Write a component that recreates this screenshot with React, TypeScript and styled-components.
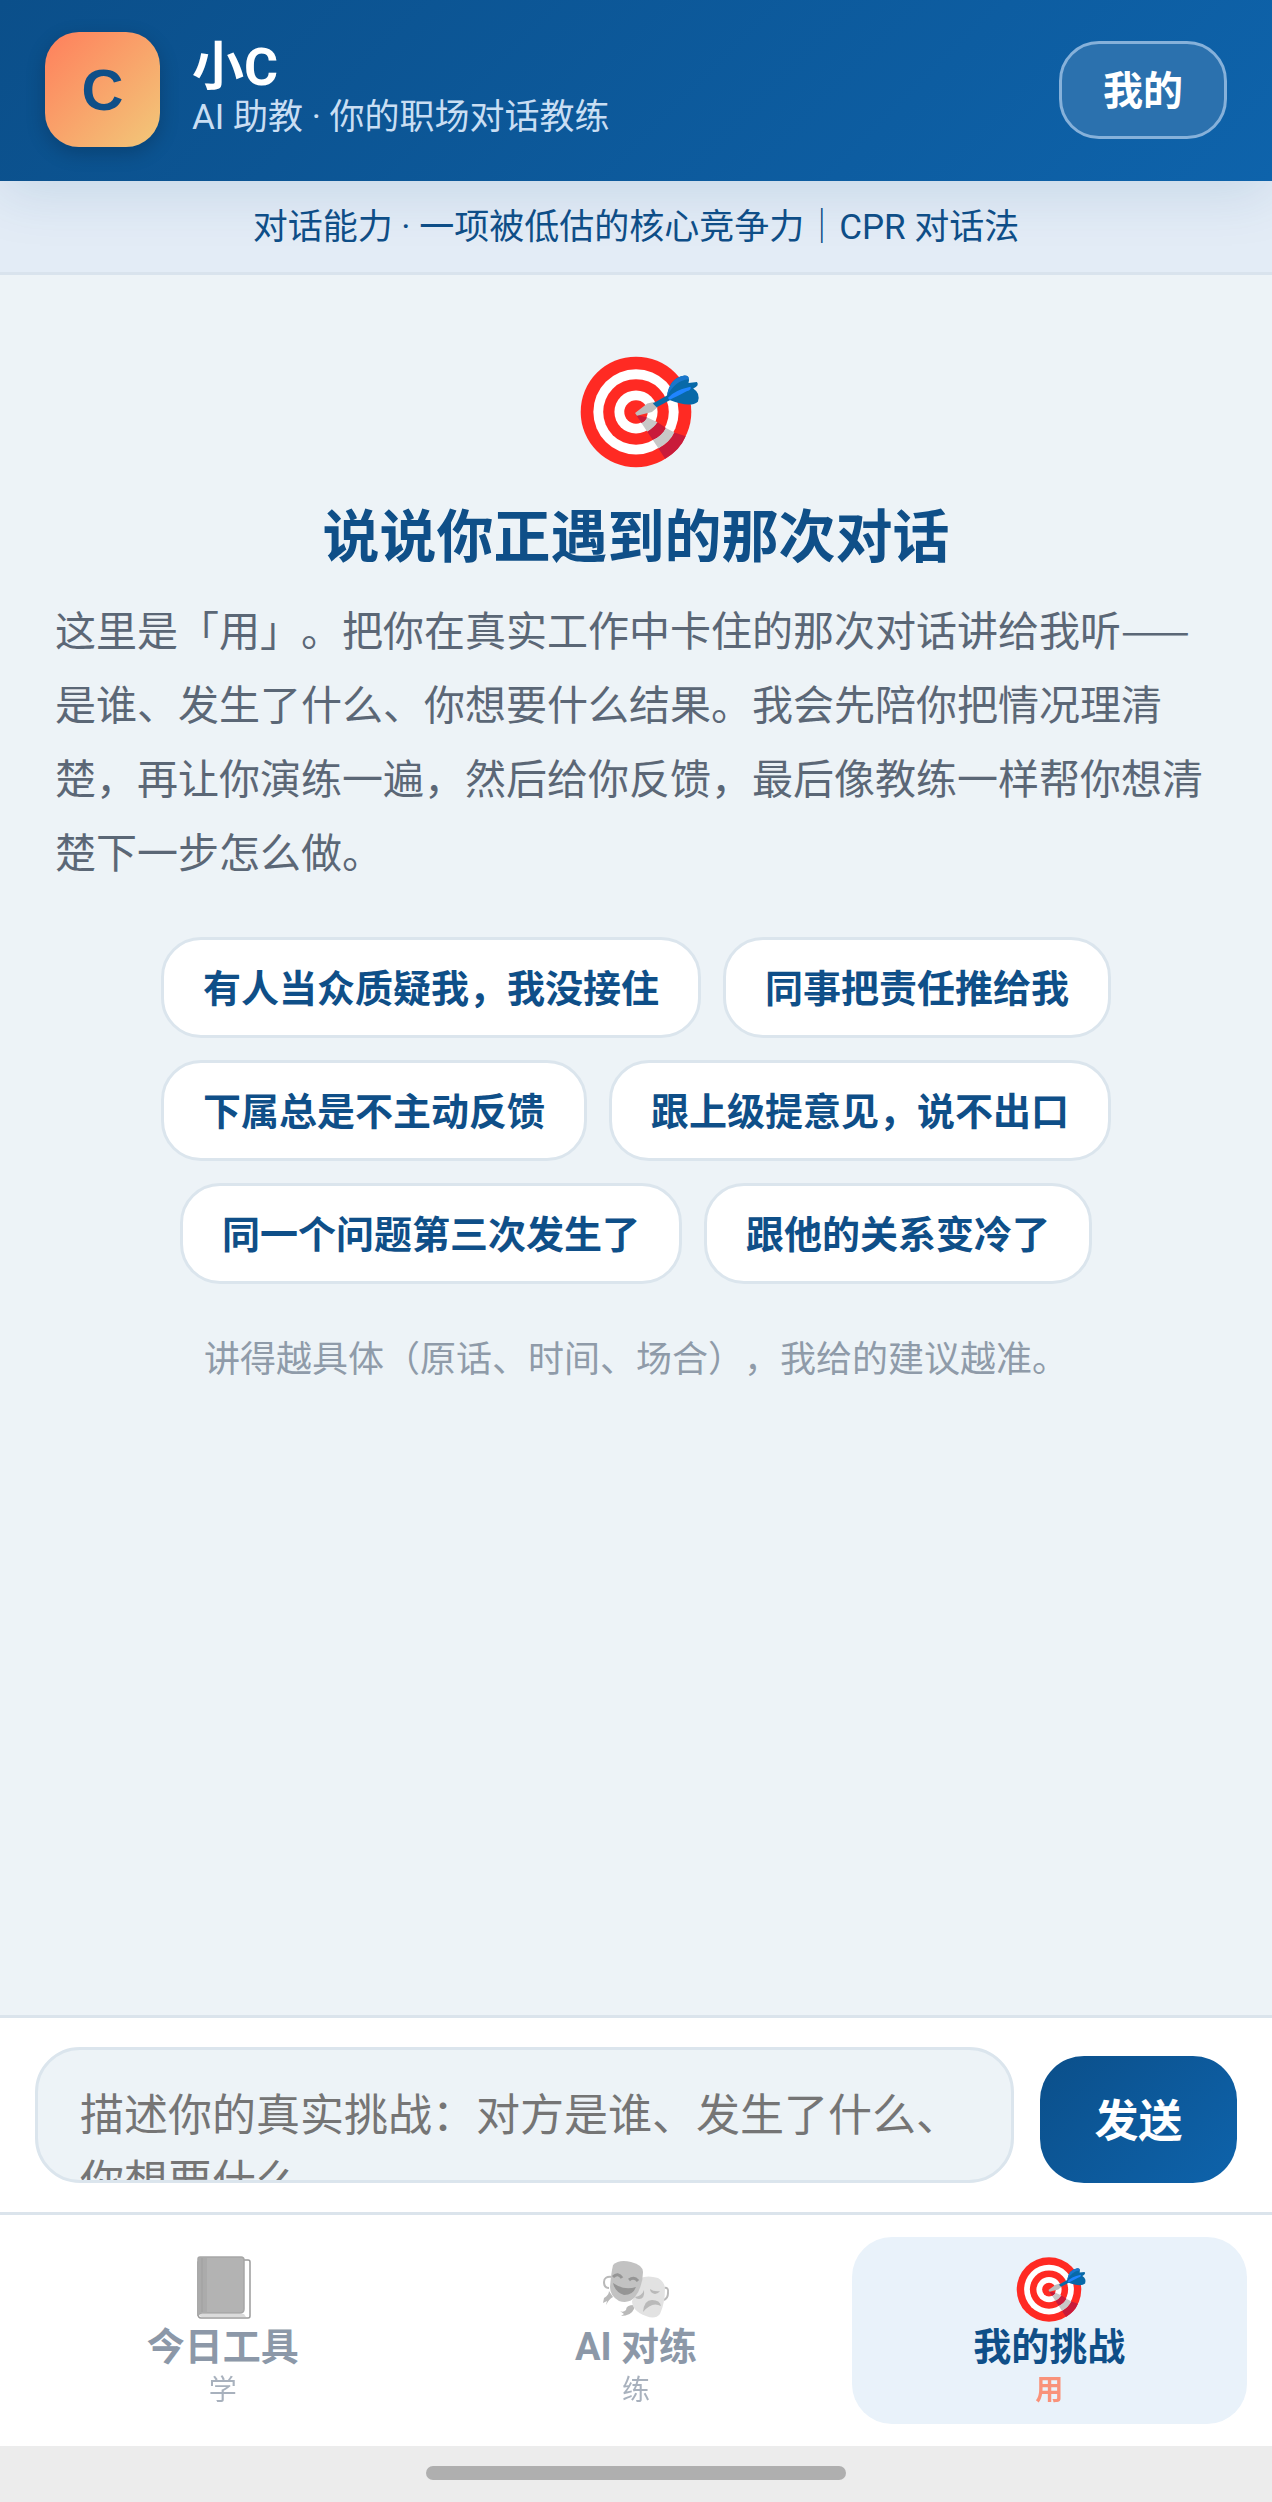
import React, { useState } from 'react';
import styled, { createGlobalStyle, css } from 'styled-components';

const GlobalStyle = createGlobalStyle`
  * {
    box-sizing: border-box;
  }

  body {
    margin: 0;
    background: #edf3f7;
    font-family: 'Noto Sans CJK SC', sans-serif;
    text-spacing-trim: space-all;
  }

  button, textarea {
    font-family: inherit;
    text-spacing-trim: inherit;
    margin: 0;
  }
`;

const Page = styled.div`
  min-height: 100vh;
  display: flex;
  flex-direction: column;
`;

const Header = styled.header`
  position: relative;
  display: flex;
  align-items: center;
  gap: 32px;
  padding: 32px 45px 34px;
  background: linear-gradient(135deg, #0b4f8a, #0e63ab);
  box-shadow: 0 12px 54px rgba(11, 79, 138, 0.13);
`;

const Avatar = styled.div`
  width: 115px;
  height: 115px;
  border-radius: 34px;
  display: flex;
  align-items: center;
  justify-content: center;
  background: linear-gradient(135deg, #ff7f5c, #f2c879);
  color: #0f4f88;
  font: bold 58px/60px 'Liberation Sans', sans-serif;
  box-shadow: 0 6px 20px rgba(0, 0, 0, 0.2);
`;

const Heading = styled.div`
  flex: 1;
  padding-top: 3px;
  font-family: Roboto, 'Noto Sans CJK SC', sans-serif;
`;

const Name = styled.h1`
  margin: 0;
  color: #fff;
  font-size: 52px;
  line-height: 54px;
`;

const Role = styled.p`
  margin: 0;
  color: #c9def3;
  font-size: 35px;
  line-height: 46px;
`;

const MineButton = styled.button`
  height: 98px;
  padding: 0 41px 4px;
  border: 3px solid #86b1da;
  border-radius: 40px;
  background: #2b71ae;
  color: #fff;
  font-size: 40px;
  font-weight: bold;
  cursor: pointer;
`;

const Slogan = styled.div`
  padding: 24px 36px 21px;
  border-bottom: 3px solid #d9e3ed;
  background: #e3ecf6;
  color: #0f4f88;
  font-family: Roboto, 'Noto Sans CJK SC', sans-serif;
  font-size: 35px;
  line-height: 46px;
  text-align: center;
`;

const Main = styled.main`
  flex: 1;
  display: flex;
  flex-direction: column;
  align-items: center;
  padding: 76px 55px 48px;
`;

const Title = styled.h2`
  margin: 19px 0 17px;
  color: #0f4f88;
  font-size: 57px;
  line-height: 84px;
`;

const Intro = styled.p`
  margin: 0;
  width: 100%;
  color: #5b6776;
  font-size: 41px;
  line-height: 74px;
`;

const Chips = styled.div`
  display: flex;
  flex-wrap: wrap;
  justify-content: center;
  gap: 22px;
  max-width: 1020px;
  margin: 50px 0 42px;
`;

const Chip = styled.button`
  height: 101px;
  padding: 0 39px 4px;
  border: 3px solid #dbe5ed;
  border-radius: 40px;
  background: #fff;
  color: #0f4f88;
  font-size: 38px;
  font-weight: bold;
  cursor: pointer;
`;

const Hint = styled.p`
  margin: 0;
  color: #8f9ba9;
  font-size: 36px;
  line-height: 60px;
`;

const Composer = styled.form`
  display: flex;
  align-items: flex-end;
  gap: 26px;
  padding: 29px 35px;
  border-top: 3px solid #dbe4ec;
  background: #fff;
`;

const Input = styled.textarea`
  flex: 1;
  min-width: 0;
  height: 136px;
  padding: 29px 42px 0;
  border: 3px solid #dbe5ed;
  border-radius: 45px;
  background: #edf3f7;
  color: #1f2d3d;
  font-size: 44px;
  line-height: 66px;
  resize: none;
  overflow: hidden;

  &::placeholder {
    color: #757575;
    opacity: 1;
  }
`;

const SendButton = styled.button`
  width: 197px;
  height: 127px;
  padding: 0 0 4px;
  border: 0;
  border-radius: 44px;
  background: linear-gradient(135deg, #0b4f8a, #0e63ab);
  color: #fff;
  font-size: 44px;
  font-weight: bold;
  cursor: pointer;
`;

const Nav = styled.nav`
  display: grid;
  grid-template-columns: repeat(3, 1fr);
  gap: 18px;
  padding: 22px 25px;
  border-top: 3px solid #dbe4ec;
  background: #fff;
`;

const TabLabel = styled.span`
  font-size: 38px;
  font-weight: bold;
  line-height: 46px;
`;

const TabSub = styled.span`
  font-size: 28px;
  line-height: 42px;
  opacity: 0.75;
`;

const Tab = styled.button<{ $active: boolean }>`
  display: flex;
  flex-direction: column;
  align-items: center;
  padding: 17px 0 12px;
  border: 0;
  border-radius: 40px;
  background: transparent;
  color: #8c98a8;
  font-family: Roboto, 'Noto Sans CJK SC', sans-serif;
  cursor: pointer;

  svg {
    filter: grayscale(1);
    opacity: 0.6;
  }

  ${({ $active }) =>
    $active &&
    css`
      background: #e9f2fa;
      color: #0f4f88;

      svg {
        filter: none;
        opacity: 1;
      }

      ${TabSub} {
        color: #ff7350;
        font-weight: bold;
      }
    `}
`;

const HomeBar = styled.div`
  display: flex;
  justify-content: center;
  padding: 20px 0 22px;
  background: #ececec;
`;

const HomeHandle = styled.div`
  width: 33%;
  height: 14px;
  border-radius: 7px;
  background: #afafaf;
`;

const TargetIcon = ({ size }: { size: number }) => (
  <svg width={size} height={size} viewBox="-3 0 128 128" overflow="visible" aria-hidden="true">
    <circle cx="61" cy="65" r="59" fill="#ff2a23" />
    <circle cx="61" cy="65" r="45.5" fill="#fff" />
    <circle cx="61" cy="65" r="35" fill="#ff2a23" />
    <circle cx="61" cy="65" r="23" fill="#fff" />
    <circle cx="61" cy="65" r="12.5" fill="#ff2a23" />
    <path d="M61 68 L67 77 Q72 75 73 71Z" fill="#c91b3a" />
    <path d="M67 77 L73 86 Q81 82 84 76 L73 71 Q71 75 67 77Z" fill="#c8c8c8" />
    <path d="M73 86 L79 95 Q90 90 93 82 L84 76 Q80 82 73 86Z" fill="#c91b3a" />
    <path d="M79 95 L85 104 Q98 97 102 87 L93 82 Q88 91 79 95Z" fill="#c8c8c8" />
    <path d="M85 104 L92 115 Q108 106 114 91 L102 87 Q97 98 85 104Z" fill="#c91b3a" />
    <path d="M60 66 L73 56 L81 54 L84 60 L78 65 L62 69Z" fill="#bdbdbd" />
    <path d="M79 56 L95 47 L98 52 L83 60Z" fill="#0869a8" />
    <path d="M94 48 Q97 28 113 26 Q119 26 117 34 L126 33 Q129 37 122 40 Q130 45 127 54 Q119 61 96 52Z" fill="#0869a8" />
    <path d="M94 48 Q97 28 113 26 Q118 26 117 30 Q103 31 94 48Z" fill="#1a76cc" />
    <path d="M95 50 Q101 42 119 38 Q121 41 115 43 Q104 49 97 52Z" fill="#1f85ff" />
  </svg>
);

const BookIcon = () => (
  <svg width="70" height="70" viewBox="0 0 70 70" aria-hidden="true">
    <path d="M12 6 H60 Q62 6 62 8 V62 Q62 64 60 64 H13 Q10 64 10 60 V8Z" fill="#fff" stroke="#5a5a5a" strokeWidth="1.5" />
    <path d="M12 60 H56 L58 63 H14 Q11 63 12 60Z" fill="#c4c4c4" />
    <path d="M12 3 H53 Q56 3 56 6 V55 Q56 59 52 59 H14 Q11 59 10 62 V5 Q10 3 12 3Z" fill="#828282" stroke="#6c6c6c" strokeWidth="1.5" />
    <path d="M11 4 H19 V59 H14 Q11 59 10 61Z" fill="#757575" />
    <path d="M14 4 V58" stroke="#686868" strokeWidth="1.5" />
  </svg>
);

const MasksIcon = () => (
  <svg width="70" height="70" viewBox="0 0 70 70" aria-hidden="true">
    <g fill="none" stroke="#8c8c8c" strokeWidth="2">
      <path d="M11 23 Q3 22 3 28 Q3 34 8 34" />
      <path d="M63 34 Q68 33 67 39 Q67 44 63 46" />
    </g>
    <path d="M8 37 Q8 41 3 44 L2 49 L6 47 L5 51 Q8 45 12 43Z" fill="#8c8c8c" />
    <path d="M33 51 Q25 51 25 56 Q22 59 19 57 L23 60 L20 62 Q30 62 33 55Z" fill="#8c8c8c" />
    <path d="M39 24 Q47 21 57 24 Q64 28 64 35 Q64 49 59 60 Q54 66 45 62 Q31 57 31 47 Q36 40 39 24Z" fill="#cfcfcf" />
    <path d="M12 11 Q18 5 30 8 Q42 11 42 18 Q42 32 34 43 Q28 50 18 47 Q9 42 9 33 Q10 20 12 11Z" fill="#9a9a9a" />
    <path d="M12 29 Q23 37 35 33 Q32 41 23 41 Q14 38 12 29Z" fill="#4f4f4f" />
    <g fill="none" stroke="#4f4f4f" strokeWidth="3">
      <path d="M12 23 Q17 18 21 24" />
      <path d="M28 26 Q33 22 37 27" />
    </g>
    <path d="M34 43 Q41 42 43 36 Q44 45 38 45 Q35 45 34 43Z" fill="#8b8b8b" />
    <path d="M49 35 Q53 38 59 37 Q57 40 54 40 Q49 39 49 35Z" fill="#8b8b8b" />
    <path d="M42 58 Q43 46 51 46 Q59 46 60 52 Q51 47 42 58Z" fill="#8b8b8b" />
  </svg>
);

const prompts = [
  '有人当众质疑我，我没接住',
  '同事把责任推给我',
  '下属总是不主动反馈',
  '跟上级提意见，说不出口',
  '同一个问题第三次发生了',
  '跟他的关系变冷了',
];

const tabs = [
  { label: '今日工具', sub: '学', icon: <BookIcon /> },
  { label: 'AI 对练', sub: '练', icon: <MasksIcon /> },
  { label: '我的挑战', sub: '用', icon: <TargetIcon size={70} /> },
];

export default function App() {
  const [text, setText] = useState('');
  const [active, setActive] = useState(2);

  return (
    <Page>
      <GlobalStyle />
      <Header>
        <Avatar>C</Avatar>
        <Heading>
          <Name>小C</Name>
          <Role>AI 助教 · 你的职场对话教练</Role>
        </Heading>
        <MineButton type="button">我的</MineButton>
      </Header>
      <Slogan>对话能力 · 一项被低估的核心竞争力｜CPR 对话法</Slogan>

      <Main>
        <TargetIcon size={120} />
        <Title>说说你正遇到的那次对话</Title>
        <Intro>
          这里是「用」。把你在真实工作中卡住的那次对话讲给我听——是谁、发生了什么、你想要什么结果。我会先陪你把情况理清楚，再让你演练一遍，然后给你反馈，最后像教练一样帮你想清楚下一步怎么做。
        </Intro>
        <Chips>
          {prompts.map((prompt) => (
            <Chip key={prompt} type="button" onClick={() => setText(prompt)}>
              {prompt}
            </Chip>
          ))}
        </Chips>
        <Hint>讲得越具体（原话、时间、场合），我给的建议越准。</Hint>
      </Main>

      <Composer onSubmit={(e) => e.preventDefault()}>
        <Input
          aria-label="描述你的真实挑战"
          placeholder="描述你的真实挑战：对方是谁、发生了什么、你想要什么"
          value={text}
          onChange={(e) => setText(e.target.value)}
        />
        <SendButton type="submit">发送</SendButton>
      </Composer>
      <Nav>
        {tabs.map((tab, i) => (
          <Tab key={tab.label} type="button" $active={i === active} onClick={() => setActive(i)}>
            {tab.icon}
            <TabLabel>{tab.label}</TabLabel>
            <TabSub>{tab.sub}</TabSub>
          </Tab>
        ))}
      </Nav>
      <HomeBar>
        <HomeHandle />
      </HomeBar>
    </Page>
  );
}
